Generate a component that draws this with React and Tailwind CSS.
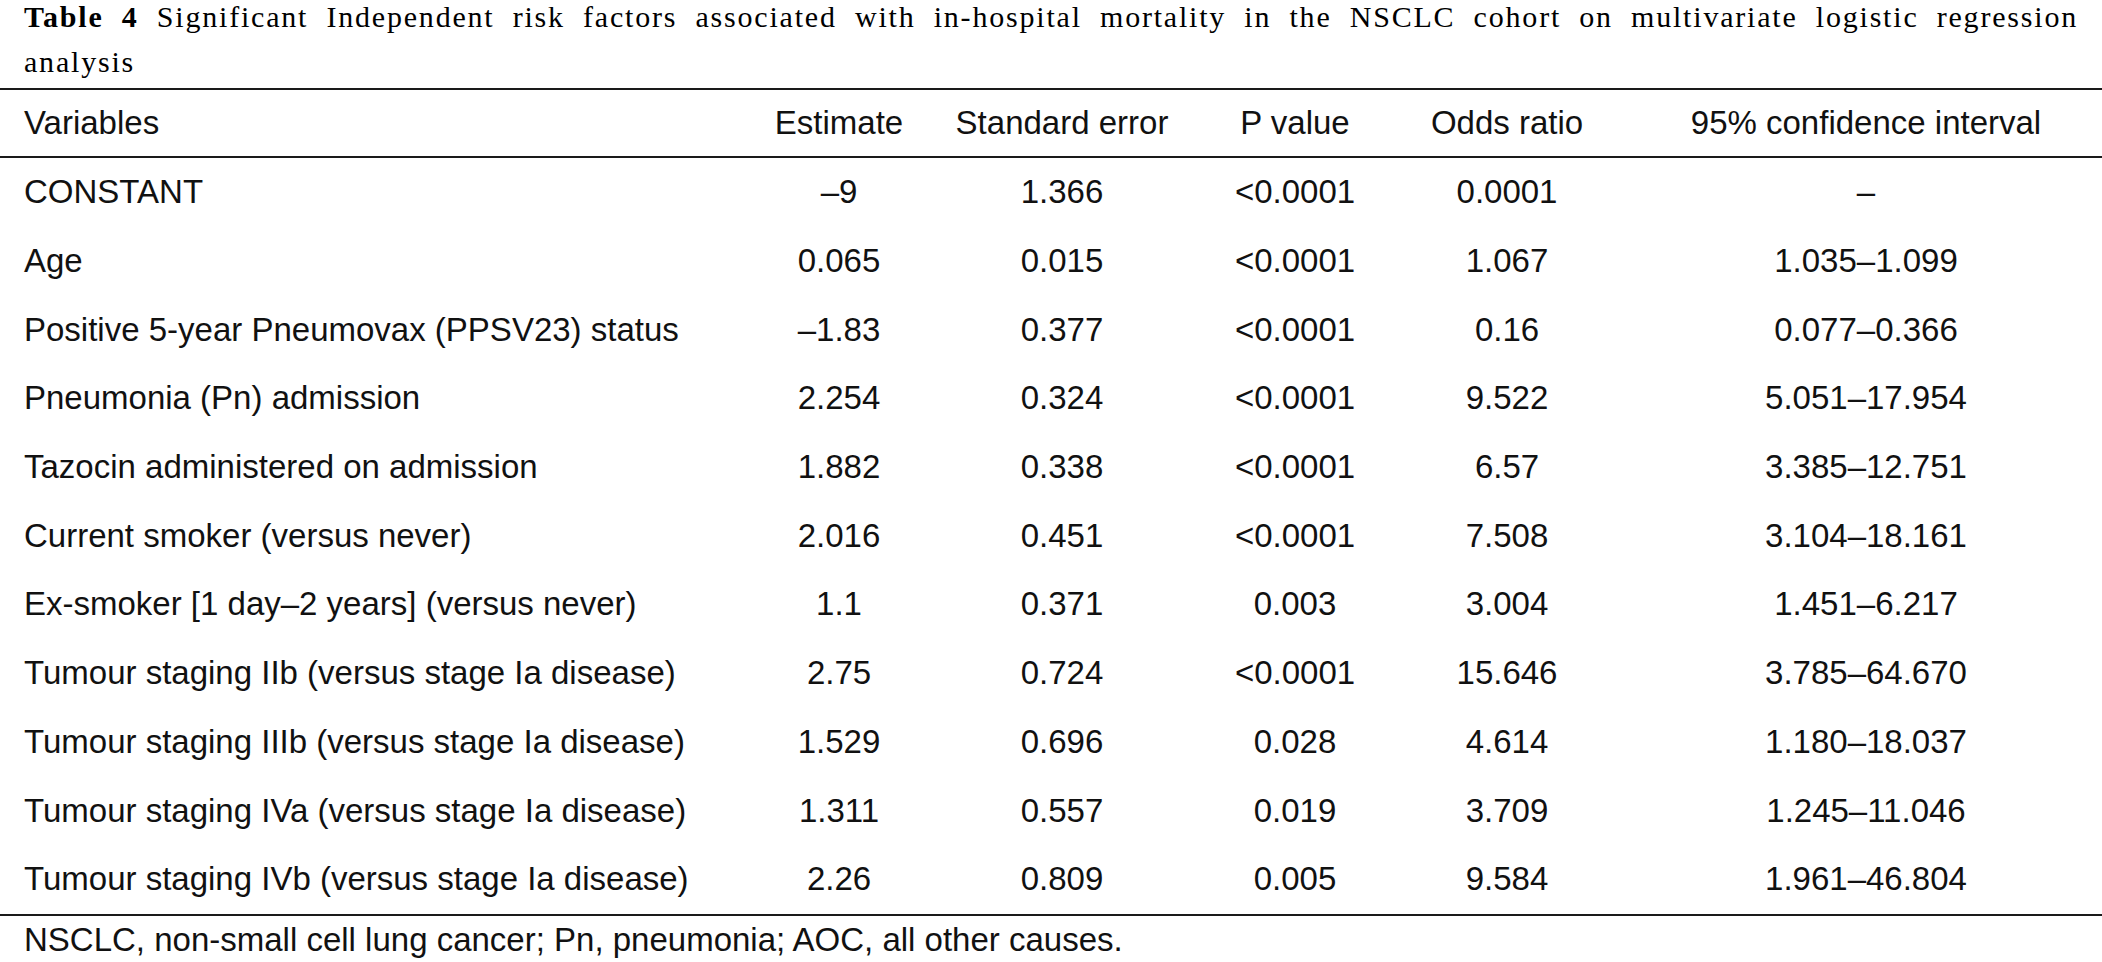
const ROWS = [
  ["CONSTANT", "–9", "1.366", "<0.0001", "0.0001", "–"],
  ["Age", "0.065", "0.015", "<0.0001", "1.067", "1.035–1.099"],
  ["Positive 5-year Pneumovax (PPSV23) status", "–1.83", "0.377", "<0.0001", "0.16", "0.077–0.366"],
  ["Pneumonia (Pn) admission", "2.254", "0.324", "<0.0001", "9.522", "5.051–17.954"],
  ["Tazocin administered on admission", "1.882", "0.338", "<0.0001", "6.57", "3.385–12.751"],
  ["Current smoker (versus never)", "2.016", "0.451", "<0.0001", "7.508", "3.104–18.161"],
  ["Ex-smoker [1 day–2 years] (versus never)", "1.1", "0.371", "0.003", "3.004", "1.451–6.217"],
  ["Tumour staging IIb (versus stage Ia disease)", "2.75", "0.724", "<0.0001", "15.646", "3.785–64.670"],
  ["Tumour staging IIIb (versus stage Ia disease)", "1.529", "0.696", "0.028", "4.614", "1.180–18.037"],
  ["Tumour staging IVa (versus stage Ia disease)", "1.311", "0.557", "0.019", "3.709", "1.245–11.046"],
  ["Tumour staging IVb (versus stage Ia disease)", "2.26", "0.809", "0.005", "9.584", "1.961–46.804"],
]

const HEAD = ["Variables", "Estimate", "Standard error", "P value", "Odds ratio", "95% confidence interval"]

function Row({ cells, className }) {
  return (
    <div className={"grid grid-cols-[760px_158px_288px_178px_246px_472px] items-center " + className}>
      {cells.map((c, i) => (
        <div key={i} className={i === 0 ? "pl-6 text-left" : "text-center"}>
          {c}
        </div>
      ))}
    </div>
  )
}

export default function App() {
  return (
    <div className="w-[2102px] h-[962px] bg-white text-[#111] overflow-hidden">
      {/* caption, first line stretched edge to edge like the journal layout */}
      <div
        className="px-6 text-[30px] leading-[34px] tracking-[1.8px] text-black"
        style={{ fontFamily: '"Liberation Serif", "Times New Roman", serif' }}
      >
        <p className="text-justify [text-align-last:justify]">
          <b>Table 4</b> Significant Independent risk factors associated with in-hospital mortality in the NSCLC cohort on multivariate logistic regression
        </p>
        <p className="mt-[11px]">analysis</p>
      </div>

      <div
        className="mt-[9px] text-[33px] leading-[32px]"
        style={{ fontFamily: '"Liberation Sans", Arial, sans-serif' }}
      >
        <div className="border-t-2 border-b-2 border-[#1a1a1a]">
          <Row cells={HEAD} className="h-[66px]" />
        </div>
        <div className="border-b-2 border-[#1a1a1a]">
          {ROWS.map((r, i) => (
            <Row key={i} cells={r} className="h-[68.7px]" />
          ))}
        </div>
        <p className="pl-6 pt-[4px] leading-[40px]">
          NSCLC, non-small cell lung cancer; Pn, pneumonia; AOC, all other causes.
        </p>
      </div>
    </div>
  )
}
